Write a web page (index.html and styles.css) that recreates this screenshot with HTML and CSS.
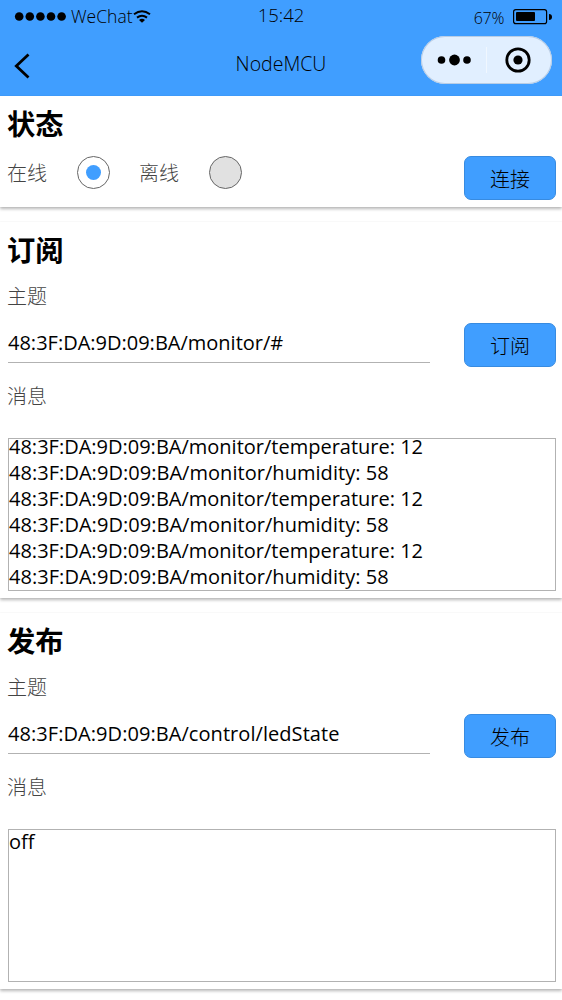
FILE: index.html
```html
<!DOCTYPE html>
<html lang="zh-CN">
<head>
<meta charset="utf-8">
<title>NodeMCU</title>
<link rel="stylesheet" href="styles.css">
</head>
<body>
<header class="top">
  <div class="status">
    <div class="carrier">
      <svg class="dots" width="52" height="10" viewBox="0 0 52 10"><circle cx="5.2" cy="5.5" r="4.3"/><circle cx="15.8" cy="5.5" r="4.3"/><circle cx="26.4" cy="5.5" r="4.3"/><circle cx="37" cy="5.5" r="4.3"/><circle cx="47.6" cy="5.5" r="4.3"/></svg>
      <span class="carrier-name">WeChat</span>
      <svg class="wifi" width="18" height="13" viewBox="0 0 18 13"><path d="M1 4.2Q9 -1.8 17 4.2M4 7.6Q9 3.8 14 7.6" fill="none" stroke="#000" stroke-width="2"/><path d="M6 10Q9 7.7 12 10L9 12.8Z"/></svg>
    </div>
    <time class="clock">15:42</time>
    <div class="power">
      <span class="percent">67%</span>
      <svg class="battery" width="39" height="16" viewBox="0 0 39 16"><rect x=".6" y=".6" width="33" height="14" rx="2.2" fill="none" stroke="#000" stroke-width="1.2"/><rect x="3" y="3" width="19" height="9" rx="1"/><path d="M36 5Q39 5 39 8T36 11Z"/></svg>
    </div>
  </div>
  <nav class="nav">
    <svg class="back" width="16" height="26" viewBox="0 0 16 26"><path d="M14.5 1.5L2.3 13L14.5 24.5" fill="none" stroke="#000" stroke-width="2.8"/></svg>
    <h1 class="title">NodeMCU</h1>
    <div class="capsule">
      <svg width="131" height="48" viewBox="0 0 131 48"><circle cx="20.5" cy="24" r="3.8"/><circle cx="33.5" cy="24" r="5.4"/><circle cx="46" cy="24" r="3.8"/><path d="M65.5 11V37" stroke="#f0f7ff"/><circle cx="97" cy="24" r="11.2" fill="none" stroke="#000" stroke-width="2.8"/><circle cx="97" cy="24" r="4.6"/></svg>
    </div>
  </nav>
</header>
<main class="cards">
  <section class="card">
    <h2 class="heading">状态</h2>
    <div class="state-row">
      <span class="label">在线</span><span class="radio radio-on"></span>
      <span class="label">离线</span><span class="radio radio-off"></span>
      <button class="btn">连接</button>
    </div>
  </section>
  <section class="card">
    <h2 class="heading">订阅</h2>
    <div class="label">主题</div>
    <div class="topic-row">
      <div class="field">48:3F:DA:9D:09:BA/monitor/#</div>
      <button class="btn">订阅</button>
    </div>
    <div class="label message-label">消息</div>
    <div class="box log">
      <div>48:3F:DA:9D:09:BA/monitor/temperature: 12</div>
      <div>48:3F:DA:9D:09:BA/monitor/humidity: 58</div>
      <div>48:3F:DA:9D:09:BA/monitor/temperature: 12</div>
      <div>48:3F:DA:9D:09:BA/monitor/humidity: 58</div>
      <div>48:3F:DA:9D:09:BA/monitor/temperature: 12</div>
      <div>48:3F:DA:9D:09:BA/monitor/humidity: 58</div>
    </div>
  </section>
  <section class="card">
    <h2 class="heading">发布</h2>
    <div class="label">主题</div>
    <div class="topic-row">
      <div class="field publish-field">48:3F:DA:9D:09:BA/control/ledState</div>
      <button class="btn">发布</button>
    </div>
    <div class="label message-label">消息</div>
    <div class="box draft">off</div>
  </section>
</main>
</body>
</html>
```
FILE: styles.css
```css
* { box-sizing: border-box; }
body {
  margin: 0;
  height: 1000px;
  overflow: hidden;
  background: #fff;
  color: #000;
  font-family: "Open Sans", "Noto Sans CJK SC", sans-serif;
}
svg { display: block; }
.top { height: 96px; background: #409eff; }
.status {
  display: grid;
  grid-template-columns: 1fr auto 1fr;
  height: 32px;
  padding: 0 10px 0 14px;
  font-weight: 300;
}
.carrier, .power { display: flex; align-items: center; }
.power { justify-content: flex-end; padding-top: 2px; }
.carrier-name { margin-left: 5px; font-size: 17.5px; }
.clock { margin-right: 4px; line-height: 30px; font-size: 18.5px; }
.percent { margin: 2px 9px 0 0; font-size: 16px; letter-spacing: -0.3px; }
.nav {
  display: grid;
  grid-template-columns: 1fr auto 1fr;
  align-items: start;
  height: 64px;
  padding: 4px 10px 0 14px;
}
.back { margin-top: 17px; }
.title { margin: 0 4px 0 0; padding-top: 4px; line-height: 48px; font-size: 19.5px; font-weight: 300; }
.capsule {
  justify-self: end;
  width: 131px;
  height: 48px;
  border-radius: 24px;
  background: #e1efff;
  box-shadow: inset 0 0 0 1px #b9cde5;
}
.cards { display: flex; flex-direction: column; gap: 15px; }
.card {
  padding: 0 6px 7px 8px;
  background: #fff;
  box-shadow: 0 2px 3px rgba(0, 0, 0, .28), 0 0 1px rgba(0, 0, 0, .08);
}
.heading { margin: 0 0 0 -1px; height: 56px; line-height: 56px; font-size: 28.3px; font-weight: 700; }
.label {
  height: 36px;
  line-height: 38px;
  text-indent: -1px;
  font-size: 20px;
  font-weight: 300;
  color: #444;
}
.state-row { display: flex; align-items: flex-start; padding-top: 4px; }
.state-row .label { width: 39px; height: 34px; line-height: 36px; white-space: nowrap; }
.radio {
  display: flex;
  align-items: center;
  justify-content: center;
  width: 33px;
  height: 33px;
  margin: 0 30px;
  border: 1px solid #666;
  border-radius: 50%;
}
.radio-on::after { content: ""; width: 15px; height: 15px; border-radius: 50%; background: #409eff; }
.radio-off { background: #e1e1e1; }
.btn {
  width: 92px;
  height: 44px;
  margin-left: auto;
  padding: 0;
  border: 1px solid #388be0;
  border-radius: 7px;
  background: #409eff;
  color: #000;
  font: 300 20px "Noto Sans CJK SC", sans-serif;
}
.topic-row { display: flex; align-items: flex-start; height: 53px; }
.field {
  width: 422px;
  height: 49px;
  padding-top: 9px;
  border-bottom: 1px solid #b2b2b2;
  line-height: 40px;
  font-size: 20px;
  white-space: nowrap;
}
.publish-field { letter-spacing: 0.06px; }
.topic-row .btn { margin-top: 9px; }
.message-label { margin-top: 11px; }
.box {
  height: 153px;
  margin-top: 24px;
  border: 1px solid #b2b2b2;
  line-height: 26px;
  font-size: 20px;
  white-space: nowrap;
}
.log div:first-child { margin-bottom: 5px; line-height: 16px; }
.log div:nth-child(even) { letter-spacing: 0.04px; }
.draft { line-height: 24px; }
```
